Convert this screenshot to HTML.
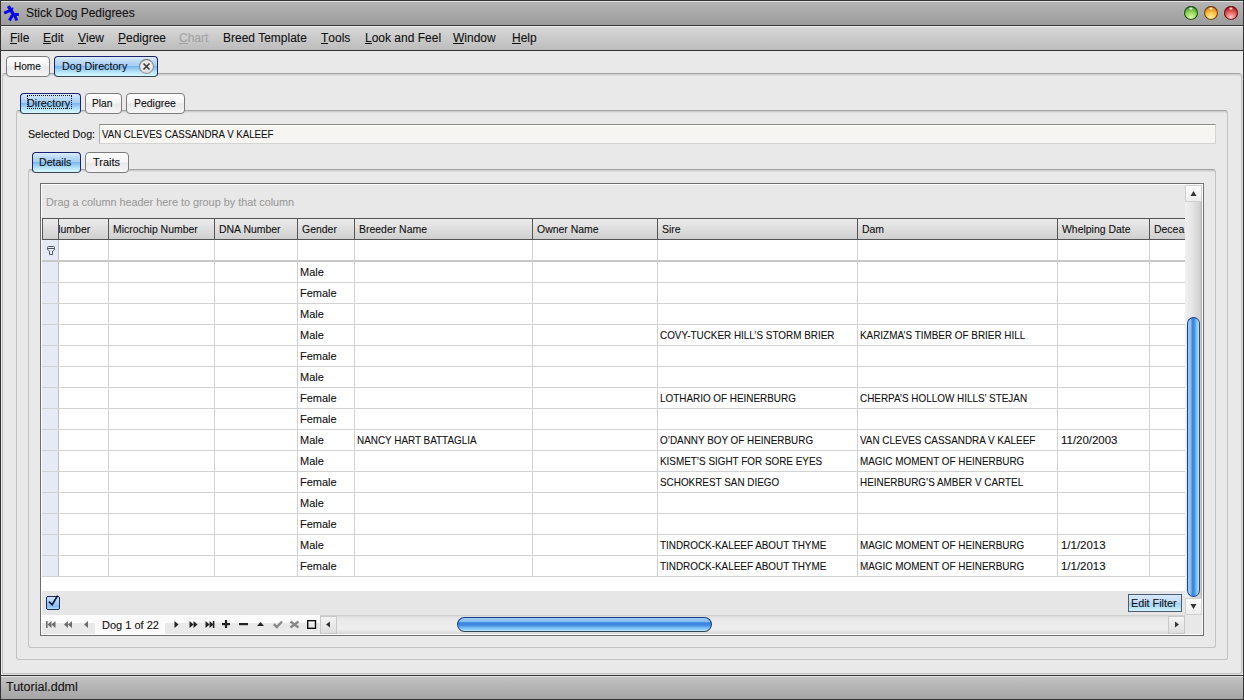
<!DOCTYPE html>
<html><head><meta charset="utf-8"><style>*{margin:0;padding:0;box-sizing:border-box}
html,body{width:1244px;height:700px;overflow:hidden;background:#e9e9e9;font-family:"Liberation Sans",sans-serif;font-size:11px;color:#111;position:relative}
.a{position:absolute}
.t{position:absolute;white-space:nowrap;line-height:1;-webkit-text-stroke:0.1px currentColor}
.ul{position:relative}.ul::after{content:"";position:absolute;left:0;right:0;top:12.2px;height:1px;background:currentColor}
#frame{left:0;top:0;width:1244px;height:700px;border:1px solid #333}
#title{left:1px;top:1px;width:1242px;height:25px;background:linear-gradient(#e2e2e2 0,#e2e2e2 1px,#b4b4b4 1px,#9c9c9c 100%);border-bottom:1px solid #3a3a3a}
#menu{left:1px;top:26px;width:1242px;height:25px;background:linear-gradient(#ececec 0,#ececec 1px,#d8d8d8 1px,#bcbcbc 100%);border-bottom:1px solid #333}
#status{left:1px;top:675px;width:1242px;height:25px;border-top:1px solid #333;border-bottom:1px solid #333;background:linear-gradient(#e4e4e4 0,#e4e4e4 1px,#c2c2c2 1px,#a4a4a4 100%)}
.tab{position:absolute;height:21px;border:1px solid #7c7c7c;border-radius:4px;background:linear-gradient(#fdfdfd,#f4f4f4 45%,#e9e9e9 55%,#f6f6f6)}
.tabs{position:absolute;height:21px;border:1px solid #1a2270;border-bottom-color:#3a4450;border-radius:4px;background:linear-gradient(#dcedfc 0%,#bcdaf8 22%,#a4cef6 47%,#7cb8f0 50%,#8ec6f2 60%,#b8e6fa 80%,#d8fafe 100%)}
.panel{position:absolute;border:1px solid #c2c2c2;border-top-color:#a4a4a4;border-radius:3px}
#grid{left:40px;top:183px;width:1164px;height:453px;border:1px solid #6e6e6e;background:#e8e8e8;box-shadow:inset 1px 1px 0 #fff,inset -1px -1px 0 #fff}
#hdr{left:42px;top:218px;width:1143px;height:22px;border-top:1px solid #555;border-bottom:1px solid #555;background:linear-gradient(#ececec,#dedede 50%,#cfcfcf)}
.hs{position:absolute;top:218px;width:1px;height:22px;background:#555}
.vl{position:absolute;top:240px;width:1px;height:337px;background:#d2d2d2}
.hl{position:absolute;left:42px;width:1143px;height:1px;background:#d2d2d2}
</style></head><body>
<div id="frame" class="a"></div>
<div id="title" class="a"></div>
<div id="menu" class="a"></div>
<div id="status" class="a"></div>
<svg class="a" style="left:0px;top:0px" width="24" height="24" viewBox="0 0 24 24">
<g fill="none" stroke="#0a0ae6" stroke-linecap="butt">
<path d="M8.3 6.2 L14.5 16" stroke-width="3.4"/>
<path d="M10 10.5 L4.2 13.2" stroke-width="3"/>
<path d="M12.2 14.5 L18.8 14.5" stroke-width="3"/>
<path d="M12.5 15 L9.5 20.5" stroke-width="3"/>
<path d="M14.5 15 L16.8 20.5" stroke-width="3"/>
<path d="M11.5 8.6 L13.2 9" stroke-width="2.4"/>
</g></svg>
<div class="t" style="left:26px;top:6.84px;font-size:12px;color:#111;">Stick Dog Pedigrees</div>
<div class="a" style="left:1184px;top:6px;width:14px;height:14px;border-radius:50%;background:radial-gradient(circle at 50% 85%,#e4fcb0 0,#98dc60 40%,#5aa83a 70%,#1e4a18 90%);box-shadow:inset 0 0 0 1px #1e4a18,0 0 0 .5px rgba(255,255,255,.25)"></div>
<div class="a" style="left:1189px;top:7px;width:4px;height:3px;border-radius:50%;background:radial-gradient(rgba(255,255,255,.95),rgba(255,255,255,0))"></div>
<div class="a" style="left:1204px;top:6px;width:14px;height:14px;border-radius:50%;background:radial-gradient(circle at 50% 85%,#fff4a8 0,#f8c444 40%,#e08a20 70%,#6a3a10 90%);box-shadow:inset 0 0 0 1px #6a3a10,0 0 0 .5px rgba(255,255,255,.25)"></div>
<div class="a" style="left:1209px;top:7px;width:4px;height:3px;border-radius:50%;background:radial-gradient(rgba(255,255,255,.95),rgba(255,255,255,0))"></div>
<div class="a" style="left:1224px;top:6px;width:14px;height:14px;border-radius:50%;background:radial-gradient(circle at 50% 85%,#ffd0d0 0,#e86a6a 40%,#c02424 70%,#6a1414 90%);box-shadow:inset 0 0 0 1px #6a1414,0 0 0 .5px rgba(255,255,255,.25)"></div>
<div class="a" style="left:1229px;top:7px;width:4px;height:3px;border-radius:50%;background:radial-gradient(rgba(255,255,255,.95),rgba(255,255,255,0))"></div>
<div class="t" style="left:10px;top:31.84px;font-size:12px;color:#111;"><span class="ul">F</span>ile</div>
<div class="t" style="left:43px;top:31.84px;font-size:12px;color:#111;"><span class="ul">E</span>dit</div>
<div class="t" style="left:78px;top:31.84px;font-size:12px;color:#111;"><span class="ul">V</span>iew</div>
<div class="t" style="left:118px;top:31.84px;font-size:12px;color:#111;"><span class="ul">P</span>edigree</div>
<div class="t" style="left:179px;top:31.84px;font-size:12px;color:#a4a4a4;"><span class="ul">C</span>hart</div>
<div class="t" style="left:223px;top:31.84px;font-size:12px;color:#111;">Breed Template</div>
<div class="t" style="left:321px;top:31.84px;font-size:12px;color:#111;"><span class="ul">T</span>ools</div>
<div class="t" style="left:365px;top:31.84px;font-size:12px;color:#111;"><span class="ul">L</span>ook and Feel</div>
<div class="t" style="left:453px;top:31.84px;font-size:12px;color:#111;"><span class="ul">W</span>indow</div>
<div class="t" style="left:512px;top:31.84px;font-size:12px;color:#111;"><span class="ul">H</span>elp</div>
<div class="panel" style="left:2px;top:73px;width:1240px;height:601px;border-bottom-left-radius:0;box-shadow:1px 1px 0 #dcdcdc,inset 0 1px 0 #cecece,inset 0 2px 0 #dedede"></div>
<div class="tab" style="left:6px;top:56px;width:44px"></div>
<div class="t" style="left:14px;top:60.69px;font-size:11px;transform:scaleX(0.91);transform-origin:0 0;">Home</div>
<div class="tabs" style="left:54px;top:56px;width:104px"></div>
<div class="t" style="left:62px;top:60.69px;font-size:11px;transform:scaleX(0.97);transform-origin:0 0;">Dog Directory</div>
<div class="a" style="left:139px;top:59px;width:15px;height:15px;border-radius:50%;border:1px solid #707070;background:linear-gradient(#e6e6e6,#ececec 50%,#dcdcdc);border-color:#6a6a6a #8a8a8a #9a9a9a #7a7a7a"></div>
<svg class="a" style="left:142px;top:62px" width="9" height="9" viewBox="0 0 9 9"><path d="M1.5 1.5 L7.5 7.5 M7.5 1.5 L1.5 7.5" stroke="#404040" stroke-width="1.7"/></svg>
<div class="panel" style="left:16px;top:110px;width:1212px;height:550px;box-shadow:inset 0 1px 0 #cecece,inset 0 2px 0 #dedede"></div>
<div class="tabs" style="left:20px;top:93px;width:61px"></div>
<div class="a" style="left:27px;top:95px;width:45px;height:14px;border:1px dotted #111"></div>
<div class="t" style="left:27px;top:97.69px;font-size:11px;transform:scaleX(0.98);transform-origin:0 0;">Directory</div>
<div class="tab" style="left:85px;top:93px;width:37px"></div>
<div class="t" style="left:92px;top:97.69px;font-size:11px;transform:scaleX(0.93);transform-origin:0 0;">Plan</div>
<div class="tab" style="left:126px;top:93px;width:59px"></div>
<div class="t" style="left:133.5px;top:97.69px;font-size:11px;transform:scaleX(0.95);transform-origin:0 0;">Pedigree</div>
<div class="t" style="left:28px;top:128.69px;font-size:11px;color:#111;transform:scaleX(0.97);transform-origin:0 0;">Selected Dog:</div>
<div class="a" style="left:99px;top:124px;width:1117px;height:20px;border:1px solid #d4d4d4;border-top-color:#8c8c8c;border-left-color:#b0b0b0;background:#f6f5f1;box-shadow:inset 0 1px 0 #fff"></div>
<div class="t" style="left:102px;top:128.69px;font-size:11px;color:#111;transform:scaleX(0.88);transform-origin:0 0;">VAN CLEVES CASSANDRA V KALEEF</div>
<div class="panel" style="left:28px;top:169px;width:1188px;height:479px;box-shadow:inset 0 1px 0 #cecece,inset 0 2px 0 #dedede"></div>
<div class="tabs" style="left:32px;top:152px;width:49px"></div>
<div class="t" style="left:39px;top:156.69px;font-size:11px;transform:scaleX(0.96);transform-origin:0 0;">Details</div>
<div class="tab" style="left:85px;top:152px;width:44px"></div>
<div class="t" style="left:93px;top:156.69px;font-size:11px;">Traits</div>
<div id="grid" class="a"></div>
<div class="t" style="left:46px;top:196.69px;font-size:11px;color:#9a9a9a;transform:scaleX(0.985);transform-origin:0 0;">Drag a column header here to group by that column</div>
<div class="a" style="left:42px;top:240px;width:1143px;height:351px;background:#fff"></div>
<div class="a" style="left:42px;top:240px;width:17px;height:337px;background:#e5eaf5"></div>
<div id="hdr" class="a"></div>
<div class="hs" style="left:58px"></div>
<div class="vl" style="left:58px;background:#bcc0c8"></div>
<div class="hs" style="left:108px"></div>
<div class="vl" style="left:108px"></div>
<div class="hs" style="left:214px"></div>
<div class="vl" style="left:214px"></div>
<div class="hs" style="left:297px"></div>
<div class="vl" style="left:297px"></div>
<div class="hs" style="left:354px"></div>
<div class="vl" style="left:354px"></div>
<div class="hs" style="left:532px"></div>
<div class="vl" style="left:532px"></div>
<div class="hs" style="left:657px"></div>
<div class="vl" style="left:657px"></div>
<div class="hs" style="left:857px"></div>
<div class="vl" style="left:857px"></div>
<div class="hs" style="left:1057px"></div>
<div class="vl" style="left:1057px"></div>
<div class="hs" style="left:1149px"></div>
<div class="vl" style="left:1149px"></div>
<div class="a" style="left:42px;top:218px;width:1px;height:22px;background:#555"></div>
<div class="a" style="left:59px;top:219px;width:49px;height:20px;overflow:hidden">
<div class="t" style="left:-6px;top:4.69px;font-size:11px;transform:scaleX(.95);transform-origin:0 0">Number</div>
</div>
<div class="t" style="left:113px;top:223.69px;font-size:11px;color:#111;transform:scaleX(0.95);transform-origin:0 0;">Microchip Number</div>
<div class="t" style="left:219px;top:223.69px;font-size:11px;color:#111;transform:scaleX(0.95);transform-origin:0 0;">DNA Number</div>
<div class="t" style="left:302px;top:223.69px;font-size:11px;color:#111;transform:scaleX(0.95);transform-origin:0 0;">Gender</div>
<div class="t" style="left:359px;top:223.69px;font-size:11px;color:#111;transform:scaleX(0.95);transform-origin:0 0;">Breeder Name</div>
<div class="t" style="left:537px;top:223.69px;font-size:11px;color:#111;transform:scaleX(0.95);transform-origin:0 0;">Owner Name</div>
<div class="t" style="left:662px;top:223.69px;font-size:11px;color:#111;transform:scaleX(0.95);transform-origin:0 0;">Sire</div>
<div class="t" style="left:862px;top:223.69px;font-size:11px;color:#111;transform:scaleX(0.95);transform-origin:0 0;">Dam</div>
<div class="t" style="left:1062px;top:223.69px;font-size:11px;color:#111;transform:scaleX(0.95);transform-origin:0 0;">Whelping Date</div>
<div class="t" style="left:1154px;top:223.69px;font-size:11px;color:#111;transform:scaleX(0.95);transform-origin:0 0;">Decea</div>
<div class="a" style="left:42px;top:260px;width:1143px;height:2px;background:#c8c8c8"></div>
<svg class="a" style="left:42px;top:241px" width="16" height="18" viewBox="42 241 16 18"><g fill="none" stroke="#50545e" stroke-width="1"><path d="M48.5 246.5 H53.5 Q54.5 246.5 54.5 247.5 V249.5 L52.5 251.2 V254.5 H49.5 V251.2 L47.5 249.5 V247.5 Q47.5 246.5 48.5 246.5Z"/><path d="M48 248.5 H54"/></g></svg>
<div class="hl" style="top:282px"></div>
<div class="hl" style="top:303px"></div>
<div class="hl" style="top:324px"></div>
<div class="hl" style="top:345px"></div>
<div class="hl" style="top:366px"></div>
<div class="hl" style="top:387px"></div>
<div class="hl" style="top:408px"></div>
<div class="hl" style="top:429px"></div>
<div class="hl" style="top:450px"></div>
<div class="hl" style="top:471px"></div>
<div class="hl" style="top:492px"></div>
<div class="hl" style="top:513px"></div>
<div class="hl" style="top:534px"></div>
<div class="hl" style="top:555px"></div>
<div class="hl" style="top:576px"></div>
<div class="t" style="left:300px;top:266.69px;font-size:11px;color:#111;">Male</div>
<div class="t" style="left:300px;top:287.69px;font-size:11px;color:#111;">Female</div>
<div class="t" style="left:300px;top:308.69px;font-size:11px;color:#111;">Male</div>
<div class="t" style="left:300px;top:329.69px;font-size:11px;color:#111;">Male</div>
<div class="t" style="left:660px;top:329.69px;font-size:11px;color:#111;transform:scaleX(0.9);transform-origin:0 0;">COVY-TUCKER HILL’S STORM BRIER</div>
<div class="t" style="left:860px;top:329.69px;font-size:11px;color:#111;transform:scaleX(0.9);transform-origin:0 0;">KARIZMA’S TIMBER OF BRIER HILL</div>
<div class="t" style="left:300px;top:350.69px;font-size:11px;color:#111;">Female</div>
<div class="t" style="left:300px;top:371.69px;font-size:11px;color:#111;">Male</div>
<div class="t" style="left:300px;top:392.69px;font-size:11px;color:#111;">Female</div>
<div class="t" style="left:660px;top:392.69px;font-size:11px;color:#111;transform:scaleX(0.9);transform-origin:0 0;">LOTHARIO OF HEINERBURG</div>
<div class="t" style="left:860px;top:392.69px;font-size:11px;color:#111;transform:scaleX(0.9);transform-origin:0 0;">CHERPA’S HOLLOW HILLS’ STEJAN</div>
<div class="t" style="left:300px;top:413.69px;font-size:11px;color:#111;">Female</div>
<div class="t" style="left:300px;top:434.69px;font-size:11px;color:#111;">Male</div>
<div class="t" style="left:357px;top:434.69px;font-size:11px;color:#111;transform:scaleX(0.9);transform-origin:0 0;">NANCY HART BATTAGLIA</div>
<div class="t" style="left:660px;top:434.69px;font-size:11px;color:#111;transform:scaleX(0.9);transform-origin:0 0;">O’DANNY BOY OF HEINERBURG</div>
<div class="t" style="left:860px;top:434.69px;font-size:11px;color:#111;transform:scaleX(0.9);transform-origin:0 0;">VAN CLEVES CASSANDRA V KALEEF</div>
<div class="t" style="left:1061px;top:434.69px;font-size:11px;color:#111;transform:scaleX(1.04);transform-origin:0 0;">11/20/2003</div>
<div class="t" style="left:300px;top:455.69px;font-size:11px;color:#111;">Male</div>
<div class="t" style="left:660px;top:455.69px;font-size:11px;color:#111;transform:scaleX(0.9);transform-origin:0 0;">KISMET’S SIGHT FOR SORE EYES</div>
<div class="t" style="left:860px;top:455.69px;font-size:11px;color:#111;transform:scaleX(0.9);transform-origin:0 0;">MAGIC MOMENT OF HEINERBURG</div>
<div class="t" style="left:300px;top:476.69px;font-size:11px;color:#111;">Female</div>
<div class="t" style="left:660px;top:476.69px;font-size:11px;color:#111;transform:scaleX(0.9);transform-origin:0 0;">SCHOKREST SAN DIEGO</div>
<div class="t" style="left:860px;top:476.69px;font-size:11px;color:#111;transform:scaleX(0.9);transform-origin:0 0;">HEINERBURG’S AMBER V CARTEL</div>
<div class="t" style="left:300px;top:497.69px;font-size:11px;color:#111;">Male</div>
<div class="t" style="left:300px;top:518.69px;font-size:11px;color:#111;">Female</div>
<div class="t" style="left:300px;top:539.69px;font-size:11px;color:#111;">Male</div>
<div class="t" style="left:660px;top:539.69px;font-size:11px;color:#111;transform:scaleX(0.9);transform-origin:0 0;">TINDROCK-KALEEF ABOUT THYME</div>
<div class="t" style="left:860px;top:539.69px;font-size:11px;color:#111;transform:scaleX(0.9);transform-origin:0 0;">MAGIC MOMENT OF HEINERBURG</div>
<div class="t" style="left:1061px;top:539.69px;font-size:11px;color:#111;transform:scaleX(1.04);transform-origin:0 0;">1/1/2013</div>
<div class="t" style="left:300px;top:560.69px;font-size:11px;color:#111;">Female</div>
<div class="t" style="left:660px;top:560.69px;font-size:11px;color:#111;transform:scaleX(0.9);transform-origin:0 0;">TINDROCK-KALEEF ABOUT THYME</div>
<div class="t" style="left:860px;top:560.69px;font-size:11px;color:#111;transform:scaleX(0.9);transform-origin:0 0;">MAGIC MOMENT OF HEINERBURG</div>
<div class="t" style="left:1061px;top:560.69px;font-size:11px;color:#111;transform:scaleX(1.04);transform-origin:0 0;">1/1/2013</div>
<div class="a" style="left:42px;top:591px;width:1143px;height:24px;background:#e6e6e6"></div>
<div class="a" style="left:46px;top:596px;width:14px;height:14px;border:1px solid #1c2c5c;border-radius:2px;background:linear-gradient(#d0e2fc,#a8ccf6 45%,#84bcf0 80%,#b8e4fa)"></div>
<svg class="a" style="left:47px;top:594px" width="13" height="14" viewBox="0 0 13 14"><path d="M1.8 7.6 L5.2 10.6 L10.6 1.6" fill="none" stroke="#0e1838" stroke-width="1.7"/></svg>
<div class="a" style="left:1128px;top:594px;width:54px;height:18px;border:1px solid #4c5c74;background:linear-gradient(#d6e8fa,#c6dff8 40%,#a8d2f4 55%,#bce8fa 85%,#d4f4fe)"></div>
<div class="t" style="left:1131px;top:597.69px;font-size:11px;color:#111;transform:scaleX(0.98);transform-origin:0 0;">Edit Filter</div>
<div class="a" style="left:42px;top:615px;width:1143px;height:19px;background:#fbfbfb"></div>
<div class="a" style="left:42px;top:623px;width:53px;height:11px;background:#e9e9e9"></div>
<div class="a" style="left:165px;top:623px;width:155px;height:11px;background:#e9e9e9"></div>
<div class="t" style="left:102px;top:619.69px;font-size:11px;color:#111;">Dog 1 of 22</div>

<svg class="a" style="left:40px;top:615px" width="290" height="19" viewBox="40 615 290 19">
<g fill="#6c6c6c">
<rect x="46" y="621" width="1.6" height="7"/><path d="M51.5 621 L47.5 624.5 L51.5 628Z"/><path d="M55.5 621 L51.5 624.5 L55.5 628Z"/>
<path d="M68 621 L64 624.5 L68 628Z"/><path d="M72 621 L68 624.5 L72 628Z"/>
<path d="M88 621 L84 624.5 L88 628Z"/>
</g>
<g fill="#222">
<path d="M174.5 621 L178.5 624.5 L174.5 628Z"/>
<path d="M189.5 621 L193.5 624.5 L189.5 628Z"/><path d="M193.5 621 L197.5 624.5 L193.5 628Z"/>
<path d="M205.5 621 L209.5 624.5 L205.5 628Z"/><path d="M209.5 621 L213.5 624.5 L209.5 628Z"/><rect x="212.8" y="621" width="1.6" height="7"/>
<rect x="222" y="623" width="8" height="2.2"/><rect x="224.9" y="620" width="2.2" height="8"/>
<rect x="239" y="623" width="9" height="2.2"/>
<path d="M257 626 L260.5 622 L264 626Z"/>
</g>
<path d="M273.8 624.2 L276.8 627 L282 621.5" fill="none" stroke="#8a8a8a" stroke-width="2.4"/>
<path d="M290.5 621.5 L298.5 627.5 M298.5 621.5 L290.5 627.5" fill="none" stroke="#888" stroke-width="2.3"/>
<rect x="307.7" y="620.7" width="7.8" height="7.6" fill="none" stroke="#111" stroke-width="1.4"/>
</svg>
<div class="a" style="left:320px;top:615px;width:865px;height:19px;background:linear-gradient(#c6c6c6 0,#dadada 1px,#e8e8e8 3px,#efefef 14px,#d6d6d6 19px)"></div>
<div class="a" style="left:320px;top:616px;width:17px;height:18px;border:1px solid #c8c8c8;background:linear-gradient(#f4f4f4,#dedede)"></div>
<svg class="a" style="left:320px;top:615px" width="17" height="19"><path d="M6 9.5 L10 6.5 L10 12.5Z" fill="#333"/></svg>
<div class="a" style="left:1168px;top:616px;width:17px;height:18px;border:1px solid #c8c8c8;background:linear-gradient(#f4f4f4,#dedede)"></div>
<svg class="a" style="left:1168px;top:615px" width="17" height="19"><path d="M11 9.5 L7 6.5 L7 12.5Z" fill="#333"/></svg>
<div class="a" style="left:457px;top:617px;width:255px;height:15px;border-radius:8px;border:1px solid #1c3c88;border-bottom-color:#34465c;background:linear-gradient(#a0ccf6 0%,#84bcf0 28%,#3c88e0 36%,#3c88e0 55%,#6cb6f2 72%,#b4e6fc 100%)"></div>
<div class="a" style="left:1185px;top:185px;width:17px;height:430px;background:linear-gradient(90deg,#f0f0f0,#e6e6e6 40%,#cfcfcf 90%,#a8a8a8)"></div>
<div class="a" style="left:1185px;top:185px;width:17px;height:17px;border:1px solid #d0d0d0;background:linear-gradient(#fdfdfd,#ececec)"></div>
<svg class="a" style="left:1185px;top:185px" width="17" height="17"><path d="M8.5 6 L11.5 11 L5.5 11Z" fill="#333"/></svg>
<div class="a" style="left:1185px;top:598px;width:17px;height:17px;border:1px solid #d0d0d0;background:linear-gradient(#fdfdfd,#ececec)"></div>
<svg class="a" style="left:1185px;top:598px" width="17" height="17"><path d="M8.5 11 L11.5 6 L5.5 6Z" fill="#333"/></svg>
<div class="a" style="left:1187px;top:317px;width:13px;height:280px;border-radius:7px;border:1px solid #1c3c88;border-right-color:#34465c;background:linear-gradient(90deg,#a0ccf6 0%,#84bcf0 28%,#3c88e0 36%,#3c88e0 55%,#6cb6f2 72%,#b4e6fc 100%)"></div>
<div class="t" style="left:6px;top:681.42px;font-size:12.5px;color:#111;">Tutorial.ddml</div>
</body></html>
